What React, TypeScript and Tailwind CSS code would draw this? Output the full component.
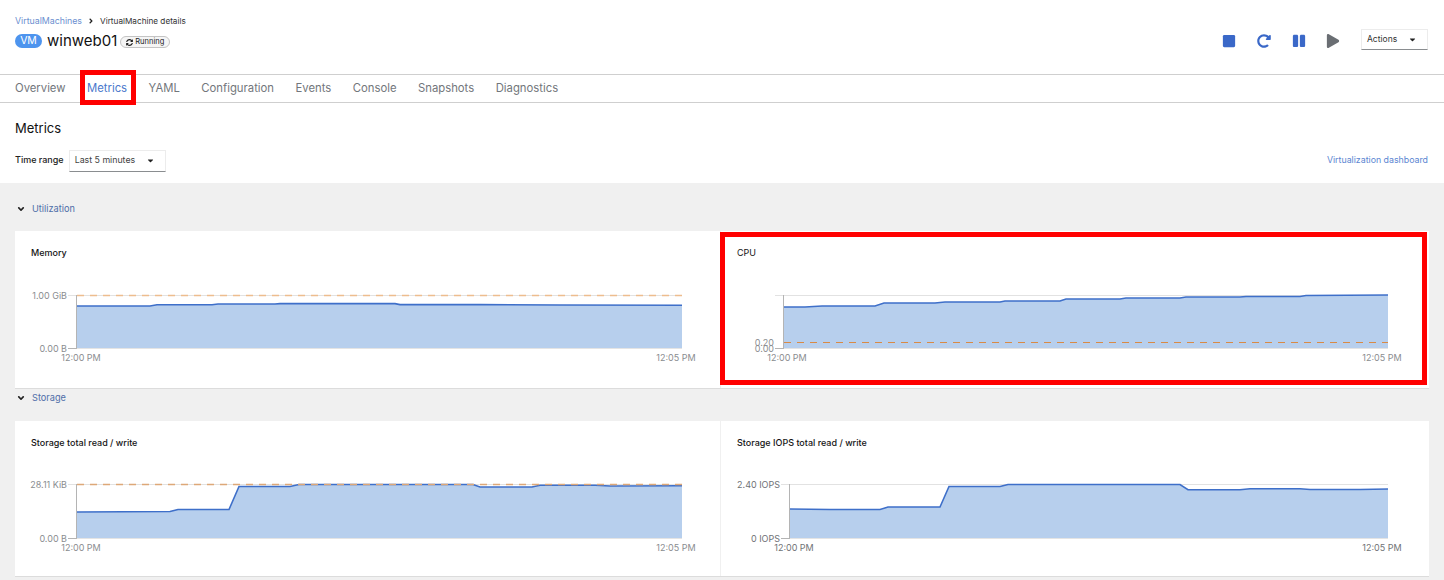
import React from "react";
import { FaAngleDown, FaAngleRight, FaCaretDown, FaPause, FaPlay, FaRedoAlt, FaStop, FaSyncAlt } from "react-icons/fa";

const tabs = ["Overview", "Metrics", "YAML", "Configuration", "Events", "Console", "Snapshots", "Diagnostics"];

interface ChartProps {
  // viewBox is in page coordinates so the points read straight off the screenshot
  box: [number, number, number, number];
  points: [number, number][];
  axisX: number;
  endX: number;
  top: number;
  bottom: number;
  topLabel: string;
  topLabelY?: number;
  bottomLabel: string;
  labelX: number;
  threshold?: number;
  thresholdColor?: string;
  thresholdWidth?: number;
  labelColor?: string;
  startLabelX: number;
  endLabelX: number;
}

const Chart: React.FC<ChartProps> = ({ box, points, axisX, endX, top, bottom, topLabel, topLabelY, bottomLabel, labelX, threshold, thresholdColor, thresholdWidth, labelColor, startLabelX, endLabelX }) => {
  const line = points.map((p) => p.join(",")).join(" ");
  const area = `${axisX},${bottom} ${line} ${endX},${bottom}`;
  return (
    <svg className="block" width={box[2]} height={box[3]} viewBox={box.join(" ")}>
      <line x1={axisX - 9} x2={endX} y1={top + 0.5} y2={top + 0.5} stroke="#e2e2e2" strokeWidth="1" />
      <polygon points={area} fill="#b7cfed" />
      <polyline points={line} fill="none" stroke="#3e6fc9" strokeWidth="1.6" />
      <line x1={axisX - 0.5} x2={axisX - 0.5} y1={top} y2={bottom + 1} stroke="#b4b4b4" />
      <line x1={axisX - 9} x2={axisX} y1={bottom + 0.5} y2={bottom + 0.5} stroke="#b4b4b4" />
      <line x1={axisX} x2={endX} y1={bottom + 0.5} y2={bottom + 0.5} stroke="#e4e4e4" />
      {threshold !== undefined && (
        <line x1={axisX} x2={endX} y1={threshold} y2={threshold} stroke={thresholdColor ?? "#efc7a0"} strokeWidth={thresholdWidth ?? 1} strokeDasharray="7 6" />
      )}
      <g fontSize="9" fill={labelColor ?? "#8a8d90"} fontFamily="Inter, sans-serif">
        <text x={labelX} y={topLabelY ?? top + 3.5} textAnchor="end">{topLabel}</text>
        <text x={labelX} y={bottom + 3.5} textAnchor="end">{bottomLabel}</text>
        <text x={startLabelX} y={bottom + 13} textAnchor="middle">12:00 PM</text>
        <text x={endLabelX} y={bottom + 13} textAnchor="middle">12:05 PM</text>
      </g>
    </svg>
  );
};

const Section: React.FC<{ label: string; className: string }> = ({ label, className }) => (
  <div className={`flex items-center pl-[16px] text-[9.2px] text-[#4f6ea8] ${className}`}>
    <FaAngleDown className="w-[10px] h-[10px] text-[#222] mr-[6px]" />
    {label}
  </div>
);

const memory: [number, number][] = [[77,306],[150,306],[157,304.7],[212,304.7],[218,304],[275,304],[280,303.6],[395,303.6],[400,304.6],[480,304.6],[560,305],[682,305.3]];
const cpu: [number, number][] = [[784,307],[805,307],[822,306],[875,306],[884,303],[935,303],[945,302],[1000,302],[1005,301],[1060,301],[1066,299],[1120,299],[1126,298],[1180,298],[1186,297],[1240,297],[1246,296.5],[1300,296.5],[1306,295.5],[1388,295]];
const storage: [number, number][] = [[77,512],[170,511.5],[178,509.5],[229,509.5],[239,486.5],[290,486.5],[299,484.5],[473,484.5],[480,487],[532,487],[540,485.2],[595,485.2],[610,486],[682,485.8]];
const iops: [number, number][] = [[790,509],[830,509.5],[880,509.5],[888,507],[940,507],[949,486.5],[1000,486.5],[1008,484.5],[1180,484.5],[1188,489.7],[1240,489.7],[1250,488.8],[1300,488.8],[1310,489.5],[1360,489.5],[1388,489]];

export default function App() {
  return (
    <div className="relative w-[1444px] h-[580px] overflow-hidden bg-white font-['Inter',sans-serif]">
      {/* page header */}
      <div className="h-[75px] border-b border-[#cfcfcf] pl-[15px] pr-[16px] pt-[15px] flex justify-between">
        <div>
          <div className="flex items-center h-[12px] text-[8.8px]">
            <span className="text-[#6c8fd0]">VirtualMachines</span>
            <FaAngleRight className="w-[8px] h-[8px] text-[#222] mx-[5px]" />
            <span className="text-[#333] text-[8.2px]">VirtualMachine details</span>
          </div>
          <div className="flex items-center mt-[5px] h-[18px]">
            <span className="w-[27px] h-[14px] rounded-full bg-[#4d94ee] text-white text-[10.5px] leading-[14px] text-center">VM</span>
            <span className="ml-[5px] text-[15px] text-[#111]">winweb01</span>
            <span className="ml-[3px] mt-[2px] flex items-center h-[12px] px-[5px] rounded-full border border-[#c4c4c4] bg-[#f5f5f5] text-[7.5px] text-[#222]">
              <FaSyncAlt className="w-[7px] h-[7px] mr-[2px]" />
              Running
            </span>
          </div>
        </div>
        <div className="flex items-start pt-[14px]">
          <FaStop className="w-[14px] h-[14px] mt-[5px] text-[#3a68c8]" />
          <FaRedoAlt className="w-[14px] h-[14px] mt-[5px] ml-[21px] text-[#3a68c8]" />
          <FaPause className="w-[14px] h-[14px] mt-[5px] ml-[21px] text-[#3a68c8]" />
          <FaPlay className="w-[14px] h-[14px] mt-[5px] ml-[20px] text-[#6a6e73]" />
          <div className="ml-[21px] w-[67px] h-[21px] border border-[#ececec] border-b-[#8a8d90] flex items-center justify-between pl-[5px] pr-[10px] text-[8.5px] text-[#333]">
            Actions
            <FaCaretDown className="w-[9px] h-[9px] text-[#222]" />
          </div>
        </div>
      </div>

      {/* tabs */}
      <div className="h-[28px] border-b border-[#cfcfcf] pl-[15px] flex items-center gap-[21.5px] text-[11.3px] text-[#72767b]">
        {tabs.map((t) => (
          <span key={t} className={t === "Metrics" ? "text-[#4a78cc]" : ""}>{t}</span>
        ))}
      </div>

      {/* toolbar */}
      <div className="h-[80px] pl-[15px] pr-[16px] pt-[17px] bg-white">
        <div className="text-[13px] leading-[16px] text-[#111]">Metrics</div>
        <div className="mt-[14px] flex items-center justify-between">
          <div className="flex items-center">
            <span className="text-[9px] font-medium text-[#222] pb-[2px]">Time range</span>
            <div className="ml-[5px] w-[97px] h-[22px] border border-[#ececec] border-b-[#8a8d90] flex items-center justify-between pl-[5px] pr-[10px] pb-[2px] text-[8.8px] text-[#444]">
              Last 5 minutes
              <FaCaretDown className="w-[9px] h-[9px] text-[#222]" />
            </div>
          </div>
          <span className="text-[8.8px] text-[#5c86d2] pb-[2px]">Virtualization dashboard</span>
        </div>
      </div>

      {/* metrics */}
      <div className="h-[397px] bg-[#f0f0f0]">
        <Section label="Utilization" className="h-[48px] pt-[4px]" />
        <div className="mx-[15px] h-[158px] bg-white grid grid-cols-[705px_1fr] border-b border-[#dcdcdc]">
          <div>
            <div className="pl-[16px] pt-[15px] h-[34px] text-[9px] font-medium text-[#151515]">Memory</div>
            <Chart box={[15, 265, 705, 123]} points={memory} axisX={77} endX={682} top={295} bottom={348} topLabel="1.00 GiB" bottomLabel="0.00 B" labelX={67} threshold={295.5} thresholdColor="#edbd8e" thresholdWidth={1.5} startLabelX={81} endLabelX={676} />
          </div>
          <div className="border-l border-[#f0f0f0]">
            <div className="pl-[16px] pt-[15px] h-[34px] text-[9px] text-[#151515]">CPU</div>
            <Chart box={[721, 265, 707, 123]} points={cpu} axisX={784} endX={1388} top={295} bottom={348} topLabel="0.20" topLabelY={346} bottomLabel="0.00" labelX={774} threshold={342.5} thresholdColor="#d98a45" thresholdWidth={1.2} startLabelX={787} endLabelX={1382} />
          </div>
        </div>
        <Section label="Storage" className="h-[17px] pt-[1px]" />
        <div className="mt-[15px] mx-[15px] h-[156px] bg-white grid grid-cols-[705px_1fr] border-b border-[#dcdcdc]">
          <div>
            <div className="pl-[16px] pt-[15px] h-[34px] text-[9px] font-medium text-[#151515]">Storage total read / write</div>
            <Chart box={[15, 455, 705, 121]} points={storage} axisX={77} endX={682} top={484} bottom={538} topLabel="28.11 KiB" bottomLabel="0.00 B" labelX={67} threshold={484.5} thresholdColor="#dda878" thresholdWidth={1.3} startLabelX={81} endLabelX={676} />
          </div>
          <div className="border-l border-[#f0f0f0]">
            <div className="pl-[16px] pt-[15px] h-[34px] text-[9px] font-medium text-[#151515]">Storage IOPS total read / write</div>
            <Chart box={[721, 455, 707, 121]} points={iops} axisX={790} endX={1388} top={484} bottom={538} topLabel="2.40 IOPS" bottomLabel="0 IOPS" labelX={780} labelColor="#6f7276" startLabelX={794} endLabelX={1382} />
          </div>
        </div>
      </div>

      {/* red annotation boxes over the screenshot */}
      <div className="absolute left-[80px] top-[70px] w-[56px] h-[35px] border-[5px] border-[#ff0000]" />
      <div className="absolute left-[720px] top-[232px] w-[707px] h-[153px] border-[5px] border-[#ff0000]" />
    </div>
  );
}
